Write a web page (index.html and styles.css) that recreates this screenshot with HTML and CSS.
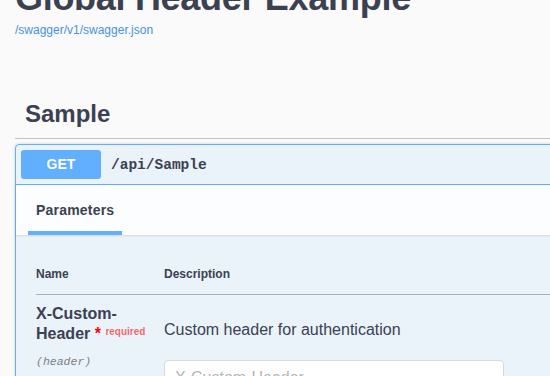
FILE: index.html
```html
<!DOCTYPE html>
<html lang="en">

<head>
    <meta charset="UTF-8">
    <meta name="viewport" content="width=device-width, initial-scale=1.0">
    <title>Global Header Example</title>
    <link rel="stylesheet" href="styles.css">
</head>

<body>
    <div class="wrapper">
        <div class="info">
            <h2 class="title">Global Header Example</h2>
            <a class="spec-link" href="#">/swagger/v1/swagger.json</a>
        </div>

        <h3 class="opblock-tag">Sample</h3>

        <div class="opblock">
            <div class="opblock-summary">
                <span class="method">GET</span>
                <span class="path">/api/Sample</span>
            </div>
            <div class="section-header">
                <div class="tab">
                    <span class="tab-label">Parameters</span>
                </div>
            </div>
            <div class="table-container">
                <table class="parameters">
                    <thead>
                        <tr>
                            <th class="col-name">Name</th>
                            <th>Description</th>
                        </tr>
                    </thead>
                    <tbody>
                        <tr>
                            <td class="col-name">
                                <div class="param-name">X-Custom-Header<span class="star">&nbsp;*</span> <span class="required">required</span></div>
                                <div class="param-in">(header)</div>
                            </td>
                            <td>
                                <p class="param-desc">Custom header for authentication</p>
                                <input class="param-input" type="text" placeholder="X-Custom-Header">
                            </td>
                        </tr>
                    </tbody>
                </table>
            </div>
        </div>
    </div>
</body>

</html>
```

FILE: styles.css
```css
html,
body {
    margin: 0;
    overflow: hidden;
    background: #fafafa;
}

body {
    font-family: "Liberation Sans", Arial, sans-serif;
    color: #3b4151;
}

.wrapper {
    width: 900px;
    padding: 0 0 0 15px;
}

.info {
    margin-top: -23px;
}

.title {
    margin: 0;
    font-size: 36px;
    line-height: 42px;
    font-weight: bold;
    letter-spacing: -0.3px;
}

.spec-link {
    display: block;
    margin-top: 4px;
    font-size: 12px;
    line-height: 14px;
    color: #4990e2;
    text-decoration: none;
}

.opblock-tag {
    margin: 53px 0 5px;
    padding: 10px 20px 10px 10px;
    font-size: 24px;
    line-height: 28px;
    font-weight: bold;
    border-bottom: 1px solid rgba(59, 65, 81, .3);
}

.opblock {
    border: 1px solid #61affe;
    border-radius: 4px;
    background: rgba(97, 175, 254, .1);
    box-shadow: 0 0 3px rgba(0, 0, 0, .19);
}

.opblock-summary {
    display: flex;
    align-items: center;
    padding: 5px;
    border-bottom: 1px solid #61affe;
}

.method {
    width: 80px;
    padding: 6px 0;
    border-radius: 3px;
    background: #61affe;
    color: #fff;
    font-size: 14px;
    line-height: 17px;
    font-weight: bold;
    text-align: center;
}

.path {
    padding: 0 10px;
    font-family: "Liberation Mono", monospace;
    font-size: 14.5px;
    font-weight: bold;
    color: #3b4151;
}

.section-header {
    display: flex;
    height: 50px;
    box-sizing: border-box;
    padding: 17px 20px 0;
    background: rgba(255, 255, 255, .8);
    box-shadow: 0 1px 2px rgba(0, 0, 0, .1);
}

.tab {
    display: flex;
    flex-direction: column;
    align-items: center;
}

.tab-label {
    font-size: 14px;
    line-height: 17px;
    font-weight: bold;
    letter-spacing: 0.2px;
}

.tab::after {
    content: "";
    width: 120%;
    height: 4px;
    margin-top: 12px;
    background: #61affe;
}

.table-container {
    padding: 20px;
}

.parameters {
    width: 100%;
    border-collapse: collapse;
}

.parameters th {
    padding: 12px 0 12px;
    font-size: 12px;
    line-height: 15px;
    font-weight: bold;
    text-align: left;
    border-bottom: 1px solid rgba(59, 65, 81, .2);
}

.parameters td {
    padding: 10px 0;
    vertical-align: top;
}

.col-name {
    width: 128px;
}

.param-name {
    width: 124px;
    font-size: 16px;
    line-height: 18px;
    font-weight: bold;
}

.star {
    color: #f00;
}

.required {
    font-size: 10px;
    color: rgba(255, 0, 0, .6);
    vertical-align: 4px;
}

.param-in {
    margin-top: 12px;
    font-family: "Liberation Mono", monospace;
    font-size: 11.5px;
    font-style: italic;
    color: #808080;
}

.param-desc {
    margin: 16px 0 21px;
    font-size: 16px;
    line-height: 18px;
}

.param-input {
    display: block;
    width: 340px;
    box-sizing: border-box;
    margin-top: 5px;
    padding: 8px 10px;
    border: 1px solid #d9d9d9;
    border-radius: 4px;
    background: #fff;
    font-family: "Liberation Sans", Arial, sans-serif;
    font-size: 16px;
}

.param-input::placeholder {
    color: #b5b5b5;
}
```
